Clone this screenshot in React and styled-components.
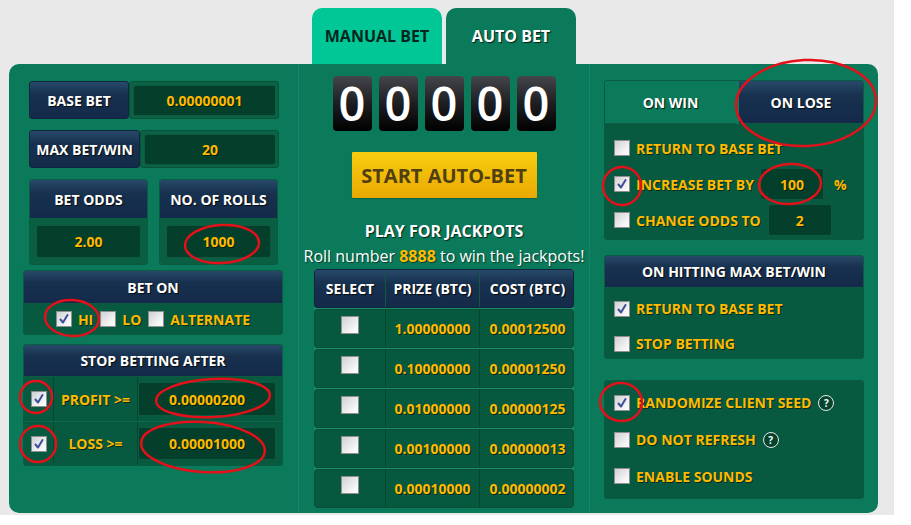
import React from 'react';
import styled, { createGlobalStyle } from 'styled-components';

const Global = createGlobalStyle`
  html, body { margin: 0; padding: 0; background: #ffffff; }
  body { font-family: "Open Sans", "Liberation Sans", sans-serif; }
  * { box-sizing: border-box; }
`;

const GREEN = '#0b7a5a';
const DARK = '#075a3f';
const INPUT = '#033f2b';
const YELLOW = '#ffba00';
const NAVY = 'linear-gradient(#28496a 0%, #18314f 35%, #142a4a 100%)';

const Page = styled.div`
  position: relative;
  width: 894px;
  height: 515px;
  background: #e9e9e9;
  padding: 8px 0 0 9px;
`;

const TabBar = styled.div`
  display: flex;
  gap: 4px;
  margin-left: 303px;
  height: 56px;
`;

const Tab = styled.div`
  width: 130px;
  height: 56px;
  border-radius: 10px 10px 0 0;
  background: ${(p) => (p.$active ? GREEN : '#00c795')};
  color: ${(p) => (p.$active ? '#fff' : '#04261e')};
  display: flex;
  align-items: center;
  justify-content: center;
  font-weight: 700;
  font-size: 16px;
  text-shadow: ${(p) => (p.$active ? '1px 1px 1px rgba(0,0,0,.75)' : 'none')};
`;

const Panel = styled.div`
  width: 869px;
  height: 449px;
  background: ${GREEN};
  border-radius: 10px;
  display: grid;
  grid-template-columns: 289px 292px 288px;
`;

const LeftCol = styled.div`
  display: flex;
  flex-direction: column;
  padding: 17px 15px 0 14px;
`;

const CenterCol = styled.div`
  display: flex;
  flex-direction: column;
  align-items: center;
  padding-top: 12px;
  border-left: 1px solid #15866a;
  border-right: 1px solid #15866a;
`;

const RightCol = styled.div`
  display: flex;
  flex-direction: column;
  padding: 16px 14px 0 14px;
`;

const FieldRow = styled.div`
  display: flex;
  height: 38px;
  margin: ${(p) => p.$mt || 0}px 4px 0 6px;
`;

const NavyLabel = styled.div`
  width: ${(p) => p.$w}px;
  flex: none;
  background: ${NAVY};
  border: 1px solid #10263e;
  border-radius: 3px;
  color: #fff;
  font-weight: 700;
  font-size: 14px;
  display: flex;
  align-items: center;
  justify-content: center;
  text-shadow: 1px 1px 1px rgba(0, 0, 0, 0.8);
`;

const InputWrap = styled.div`
  flex: 1;
  background: #0c6245;
  border: 1px solid #09523a;
  border-radius: 3px;
  padding: 3px 2px 2px 3px;
`;

const InputBox = styled.div`
  height: 100%;
  flex: ${(p) => (p.$grow ? 1 : 'none')};
  width: ${(p) => (p.$full ? '100%' : 'auto')};
  background: ${INPUT};
  border: 1px solid #0e5a41;
  border-radius: 3px;
  color: ${YELLOW};
  font-weight: 700;
  font-size: 14px;
  display: flex;
  align-items: center;
  justify-content: center;
  text-shadow: 1px 1px 0 rgba(0, 0, 0, 0.55);
`;

const CardRow = styled.div`
  display: grid;
  grid-template-columns: 119px 119px;
  gap: 11px;
  margin: 11px 4px 0 6px;
`;

const Card = styled.div`
  height: 86px;
  border-radius: 3px;
  overflow: hidden;
  display: flex;
  flex-direction: column;
  border: 1px solid #0a5c40;
`;

const CardHead = styled.div`
  height: 38px;
  flex: none;
  background: ${NAVY};
  color: #fff;
  font-weight: 700;
  font-size: 14px;
  display: flex;
  align-items: center;
  justify-content: center;
  text-shadow: 1px 1px 1px rgba(0, 0, 0, 0.8);
`;

const CardBody = styled.div`
  flex: 1;
  background: #0a5e42;
  padding: 7px 6px 6px 6px;
  display: flex;
`;

const Box = styled.div`
  margin-top: ${(p) => p.$mt || 0}px;
  border-radius: 3px;
  overflow: hidden;
  border: 1px solid #0a5c40;
  background: ${DARK};
`;

const BoxHead = styled.div`
  height: ${(p) => p.$h || 32}px;
  background: ${NAVY};
  color: #fff;
  font-weight: 700;
  font-size: 14px;
  display: flex;
  align-items: center;
  justify-content: center;
  text-shadow: 1px 1px 1px rgba(0, 0, 0, 0.8);
  border-bottom: 1px solid #0e5a41;
`;

const BetOnBody = styled.div`
  height: 30px;
  display: flex;
  align-items: center;
  justify-content: center;
  gap: 7px;
`;

const Choice = styled.label`
  display: flex;
  align-items: center;
  gap: 6px;
  color: ${YELLOW};
  font-weight: 700;
  font-size: 14px;
  text-shadow: 1px 1px 0 rgba(0, 0, 0, 0.55);
`;

const StopRow = styled.div`
  display: grid;
  grid-template-columns: 30px 84px 1fr;
  height: 44px;
  border-top: ${(p) => (p.$first ? 'none' : '1px solid #0d6a4b')};
`;

const Cell = styled.div`
  display: flex;
  align-items: center;
  justify-content: center;
  border-right: ${(p) => (p.$sep ? '1px solid #04482f' : 'none')};
  color: ${YELLOW};
  font-weight: 700;
  font-size: 14px;
  text-shadow: 1px 1px 0 rgba(0, 0, 0, 0.55);
  padding: ${(p) => p.$pad || '0'};
`;

const Digits = styled.div`
  display: flex;
  gap: 7px;
`;

const Digit = styled.div`
  width: 39px;
  height: 55px;
  border-radius: 4px;
  background: linear-gradient(#45464b 0%, #1d1e21 50%, #000 100%);
  color: #fff;
  font-size: 47px;
  font-weight: 600;
  display: flex;
  align-items: center;
  justify-content: center;
  line-height: 1;
`;

const StartButton = styled.div`
  margin-top: 21px;
  width: 185px;
  height: 46px;
  background: linear-gradient(#f7cd10, #e9a902);
  color: #503f10;
  font-weight: 700;
  font-size: 20px;
  display: flex;
  align-items: center;
  justify-content: center;
  border-radius: 1px;
  box-shadow: 0 1px 1px rgba(0, 0, 0, 0.2);
`;

const JackTitle = styled.div`
  margin-top: 23px;
  line-height: 20px;
  color: #fff;
  font-weight: 700;
  font-size: 16px;
  text-shadow: 1px 1px 1px rgba(0, 0, 0, 0.7);
`;

const JackSub = styled.div`
  margin-top: 4px;
  line-height: 22px;
  color: #fff;
  font-size: 16px;
  text-shadow: 1px 1px 1px rgba(0, 0, 0, 0.5);
  white-space: nowrap;
`;

const Hl = styled.span`
  color: ${YELLOW};
  font-weight: 700;
`;

const Table = styled.div`
  margin-top: 2px;
  width: 260px;
  display: flex;
  flex-direction: column;
  gap: 1px;
  background: #1a8c68;
`;

const TRow = styled.div`
  display: grid;
  grid-template-columns: 71px 94px 95px;
  height: 39px;
  border-radius: 3px;
  background: ${(p) => (p.$head ? NAVY : '#06583f')};
  border: 1px solid ${(p) => (p.$head ? '#10263e' : '#0a5038')};
`;

const TCell = styled.div`
  display: flex;
  align-items: ${(p) => (p.$top ? 'flex-start' : 'center')};
  padding-top: ${(p) => (p.$top ? '6px' : '0')};
  justify-content: center;
  border-right: ${(p) => (p.$last ? 'none' : `1px solid ${p.$head ? '#0c5a40' : '#04472f'}`)};
  color: ${(p) => (p.$head ? '#fff' : YELLOW)};
  font-weight: 700;
  font-size: 14px;
  text-shadow: ${(p) => (p.$head ? '1px 1px 1px rgba(0,0,0,.8)' : '1px 1px 0 rgba(0,0,0,.55)')};
`;

const WinTabs = styled.div`
  display: grid;
  grid-template-columns: 131px 1fr;
  height: 43px;
  gap: 3px;
  background: ${GREEN};
`;

const WinTab = styled.div`
  display: flex;
  align-items: center;
  justify-content: center;
  color: #fff;
  font-weight: 700;
  font-size: 14px;
  text-shadow: 1px 1px 1px rgba(0, 0, 0, 0.8);
  background: ${(p) => (p.$active ? NAVY : GREEN)};
  border-bottom: 1px solid #0d5a40;
`;

const OptBody = styled.div`
  padding-top: ${(p) => p.$pt || 0}px;
  height: ${(p) => p.$h}px;
`;

const OptRow = styled.div`
  display: flex;
  align-items: center;
  height: ${(p) => p.$h || 36}px;
  padding-left: 9px;
  gap: 6px;
  color: ${YELLOW};
  font-weight: 700;
  font-size: 14px;
  text-shadow: 1px 1px 0 rgba(0, 0, 0, 0.55);
`;

const SmallInput = styled.div`
  width: 64px;
  height: 32px;
  margin-left: ${(p) => p.$ml || 0}px;
  background: ${INPUT};
  border: 1px solid #0e5a41;
  border-radius: 3px;
  display: flex;
  align-items: center;
  justify-content: center;
`;

const Pct = styled.span`
  margin-left: 4px;
`;

const Help = styled.span`
  width: 16px;
  height: 16px;
  border: 1px solid #e8e8e8;
  border-radius: 50%;
  background: #05432e;
  color: #fff;
  font-size: 10px;
  font-weight: 700;
  display: inline-flex;
  align-items: center;
  justify-content: center;
  margin-left: 1px;
  text-shadow: none;
`;

const CheckBox = styled.span`
  width: ${(p) => p.$size || 16}px;
  height: ${(p) => p.$size || 16}px;
  flex: none;
  border: 1px solid #8f8f8f;
  background: linear-gradient(135deg, #cfd0d3 0%, #f4f4f4 70%, #ffffff 100%);
  display: inline-flex;
  align-items: center;
  justify-content: center;
`;

const Overlay = styled.svg`
  position: absolute;
  left: 0;
  top: 0;
  width: 911px;
  height: 525px;
  pointer-events: none;
`;

function Check({ on, size }) {
  return (
    <CheckBox $size={size}>
      {on && (
        <svg width="12" height="12" viewBox="0 0 12 12">
          <path d="M2.5 6.5 L5 9.5 L9.5 2" stroke="#3c4f9c" strokeWidth="2" fill="none" strokeLinecap="round" strokeLinejoin="round" />
        </svg>
      )}
    </CheckBox>
  );
}

const jackpots = [
  ['1.00000000', '0.00012500'],
  ['0.10000000', '0.00001250'],
  ['0.01000000', '0.00000125'],
  ['0.00100000', '0.00000013'],
  ['0.00010000', '0.00000002'],
];

const rings = [
  [222, 244, 37, 19],
  [72, 318, 27, 18],
  [36, 397, 16, 16],
  [38, 444, 18, 18],
  [213, 398, 57, 19],
  [203, 447, 62, 25],
  [806, 103, 70, 43],
  [622, 186, 19, 19],
  [790, 184, 31, 20],
  [621, 402, 21, 19],
];

export default function App() {
  return (
    <>
      <Global />
      <Page>
        <TabBar>
          <Tab>MANUAL BET</Tab>
          <Tab $active>AUTO BET</Tab>
        </TabBar>
        <Panel>
          <LeftCol>
            <FieldRow>
              <NavyLabel $w={100}>BASE BET</NavyLabel>
              <InputWrap>
                <InputBox>0.00000001</InputBox>
              </InputWrap>
            </FieldRow>
            <FieldRow $mt={11}>
              <NavyLabel $w={111}>MAX BET/WIN</NavyLabel>
              <InputWrap>
                <InputBox>20</InputBox>
              </InputWrap>
            </FieldRow>
            <CardRow>
              <Card>
                <CardHead>BET ODDS</CardHead>
                <CardBody>
                  <InputBox $grow>2.00</InputBox>
                </CardBody>
              </Card>
              <Card>
                <CardHead>NO. OF ROLLS</CardHead>
                <CardBody>
                  <InputBox $grow>1000</InputBox>
                </CardBody>
              </Card>
            </CardRow>
            <Box $mt={5}>
              <BoxHead $h={33}>BET ON</BoxHead>
              <BetOnBody>
                <Choice><Check on />HI</Choice>
                <Choice><Check />LO</Choice>
                <Choice><Check />ALTERNATE</Choice>
              </BetOnBody>
            </Box>
            <Box $mt={9}>
              <BoxHead>STOP BETTING AFTER</BoxHead>
              <StopRow $first>
                <Cell $sep><Check on /></Cell>
                <Cell $sep>PROFIT &gt;=</Cell>
                <Cell $pad="5px 6px 5px 0"><InputBox $full>0.00000200</InputBox></Cell>
              </StopRow>
              <StopRow>
                <Cell $sep><Check on /></Cell>
                <Cell $sep>LOSS &gt;=</Cell>
                <Cell $pad="5px 6px 5px 0"><InputBox $full>0.00001000</InputBox></Cell>
              </StopRow>
            </Box>
          </LeftCol>

          <CenterCol>
            <Digits>
              {[0, 1, 2, 3, 4].map((i) => (
                <Digit key={i}>0</Digit>
              ))}
            </Digits>
            <StartButton>START AUTO-BET</StartButton>
            <JackTitle>PLAY FOR JACKPOTS</JackTitle>
            <JackSub>
              Roll number <Hl>8888</Hl> to win the jackpots!
            </JackSub>
            <Table>
              <TRow $head>
                <TCell $head>SELECT</TCell>
                <TCell $head>PRIZE (BTC)</TCell>
                <TCell $head $last>COST (BTC)</TCell>
              </TRow>
              {jackpots.map(([p, c]) => (
                <TRow key={p}>
                  <TCell $top><Check size={18} /></TCell>
                  <TCell>{p}</TCell>
                  <TCell $last>{c}</TCell>
                </TRow>
              ))}
            </Table>
          </CenterCol>

          <RightCol>
            <Box>
              <WinTabs>
                <WinTab>ON WIN</WinTab>
                <WinTab $active>ON LOSE</WinTab>
              </WinTabs>
              <OptBody $pt={6} $h={115}>
                <OptRow><Check />RETURN TO BASE BET</OptRow>
                <OptRow>
                  <Check on />INCREASE BET BY
                  <SmallInput $ml={0}>100</SmallInput>
                  <Pct>%</Pct>
                </OptRow>
                <OptRow>
                  <Check />CHANGE ODDS TO
                  <SmallInput $ml={1}>2</SmallInput>
                </OptRow>
              </OptBody>
            </Box>
            <Box $mt={15}>
              <BoxHead>ON HITTING MAX BET/WIN</BoxHead>
              <OptBody $pt={3} $h={70}>
                <OptRow $h={35}><Check on />RETURN TO BASE BET</OptRow>
                <OptRow $h={35}><Check />STOP BETTING</OptRow>
              </OptBody>
            </Box>
            <Box $mt={21}>
              <OptBody $pt={3} $h={117}>
                <OptRow $h={37}><Check on />RANDOMIZE CLIENT SEED<Help>?</Help></OptRow>
                <OptRow $h={37}><Check />DO NOT REFRESH<Help>?</Help></OptRow>
                <OptRow $h={36}><Check />ENABLE SOUNDS</OptRow>
              </OptBody>
            </Box>
          </RightCol>
        </Panel>
        <Overlay viewBox="0 0 911 525">
          {rings.map(([cx, cy, rx, ry], i) => (
            <ellipse key={i} cx={cx} cy={cy} rx={rx} ry={ry} fill="none" stroke="#e4101a" strokeWidth="2.5" transform={`rotate(${i % 2 ? 4 : -3} ${cx} ${cy})`} />
          ))}
        </Overlay>
      </Page>
    </>
  );
}
